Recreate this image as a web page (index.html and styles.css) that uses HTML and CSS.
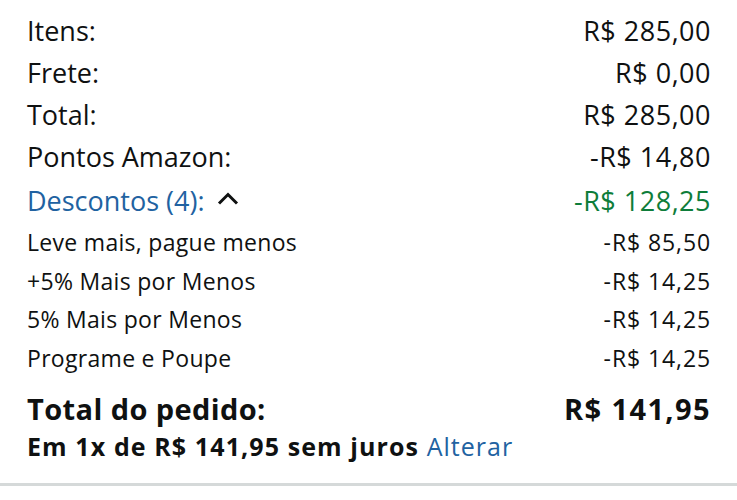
FILE: index.html
```html
<!DOCTYPE html>
<html lang="pt-BR">
<head>
    <meta charset="UTF-8">
    <meta name="viewport" content="width=device-width, initial-scale=1.0">
    <title>Resumo do pedido</title>
    <link rel="stylesheet" href="styles.css">
</head>
<body>
    <div class="summary">
        <div class="row">
            <span>Itens:</span>
            <span class="amount">R$ 285,00</span>
        </div>
        <div class="row">
            <span>Frete:</span>
            <span class="amount">R$ 0,00</span>
        </div>
        <div class="row">
            <span>Total:</span>
            <span class="amount">R$ 285,00</span>
        </div>
        <div class="row">
            <span>Pontos Amazon:</span>
            <span class="amount">-R$ 14,80</span>
        </div>
        <div class="row discounts">
            <span class="toggle">
                <span class="link">Descontos (4):</span>
                <svg class="chevron" width="22" height="13" viewBox="0 0 22 13">
                    <path d="M2 11.5 L11 2.5 L20 11.5" fill="none" stroke="#0f1111" stroke-width="3"/>
                </svg>
            </span>
            <span class="amount green">-R$ 128,25</span>
        </div>
        <div class="row small">
            <span class="label">Leve mais, pague menos</span>
            <span class="amount">-R$ 85,50</span>
        </div>
        <div class="row small">
            <span class="label">+5% Mais por Menos</span>
            <span class="amount">-R$ 14,25</span>
        </div>
        <div class="row small">
            <span class="label">5% Mais por Menos</span>
            <span class="amount">-R$ 14,25</span>
        </div>
        <div class="row small">
            <span class="label">Programe e Poupe</span>
            <span class="amount">-R$ 14,25</span>
        </div>
        <div class="row grand">
            <span class="label">Total do pedido:</span>
            <span class="amount">R$ 141,95</span>
        </div>
        <div class="installments">
            Em 1x de R$ 141,95 sem juros <span class="link">Alterar</span>
        </div>
    </div>
    <div class="divider"></div>
</body>
</html>
```

FILE: styles.css
```css
:root {
    --text: #0f1111;
    --link: #2162a1;
    --green: #0e7d3a;
    --line: #d5d9d9;
}

* {
    box-sizing: border-box;
}

body {
    margin: 0;
    background: #fff;
    color: var(--text);
    font-family: "Open Sans", "Noto Sans", sans-serif;
}

.summary {
    padding: 9px 26px 0 27px;
}

.row {
    display: flex;
    justify-content: space-between;
    align-items: center;
    height: 42px;
    font-size: 27px;
}

.row .amount {
    letter-spacing: 0.5px;
}

.row.discounts {
    height: 46px;
}

.toggle {
    display: flex;
    align-items: center;
    gap: 12px;
}

.chevron {
    margin-top: -4px;
}

.link {
    color: var(--link);
}

.green {
    color: var(--green);
}

.row.small {
    height: 38.5px;
    font-size: 23px;
}

.row.small .label {
    letter-spacing: 0.3px;
}

.row.small .amount {
    letter-spacing: 0.9px;
}

.row.grand {
    height: 46px;
    margin-top: 8px;
    font-size: 29px;
    font-weight: 700;
}

.row.grand .label {
    letter-spacing: 0.4px;
}

.row.grand .amount {
    letter-spacing: 1.4px;
}

.installments {
    font-size: 25px;
    font-weight: 700;
    line-height: 30px;
    letter-spacing: 1.1px;
}

.installments .link {
    font-weight: 400;
    letter-spacing: 1px;
}

.divider {
    height: 3px;
    background: var(--line);
    margin-top: 22px;
}
```
